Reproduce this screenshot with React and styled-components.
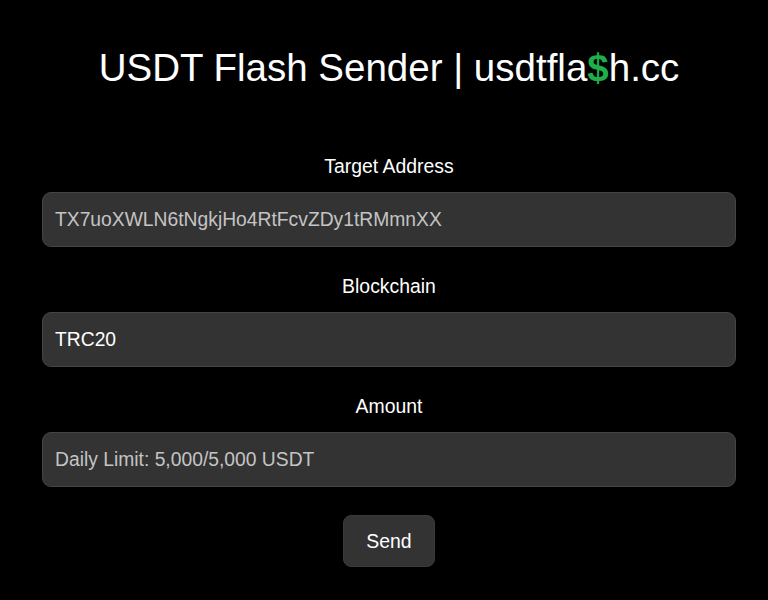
import React from "react";
import styled, { createGlobalStyle } from "styled-components";

const Global = createGlobalStyle`
  html, body { margin: 0; padding: 0; background: #000; }
  body { font-family: "Liberation Sans", Arial, sans-serif; color: #fff; }
`;

const Page = styled.div`
  width: 768px;
  height: 600px;
  background: #000;
  box-sizing: border-box;
  padding: 45px 32px 0 42px;
  display: flex;
  flex-direction: column;
  align-items: stretch;
`;

const Title = styled.h1`
  margin: 0 0 63px 0;
  font-size: 38.5px;
  font-weight: normal;
  line-height: 46px;
  text-align: center;
  color: #fff;
`;

const Dollar = styled.span`
  color: #1fae4b;
  font-weight: bold;
`;

const Field = styled.div`
  display: flex;
  flex-direction: column;
  align-items: stretch;
  margin-bottom: 27px;
`;

const Label = styled.label`
  display: block;
  text-align: center;
  font-size: 19.4px;
  line-height: 24px;
  margin-bottom: 14px;
  color: #fff;
`;

const Input = styled.div`
  box-sizing: border-box;
  height: 55px;
  border-radius: 9px;
  background: #333;
  border: 1px solid #444;
  padding: 0 12px;
  display: flex;
  align-items: center;
  font-size: 19.3px;
  color: ${(p) => (p.$placeholder ? "#c4c4c4" : "#fff")};
`;

const ButtonRow = styled.div`
  display: flex;
  justify-content: center;
  margin-top: 1px;
`;

const Button = styled.button`
  width: 92px;
  height: 52px;
  border-radius: 8px;
  background: #333;
  border: 1px solid #3a3a3a;
  color: #fff;
  font-family: "Liberation Sans", Arial, sans-serif;
  font-size: 19.4px;
  cursor: pointer;
`;

export default function App() {
  return (
    <>
      <Global />
      <Page>
        <Title>
          USDT Flash Sender | usdtfla<Dollar>$</Dollar>h.cc
        </Title>
        <Field>
          <Label>Target Address</Label>
          <Input $placeholder>TX7uoXWLN6tNgkjHo4RtFcvZDy1tRMmnXX</Input>
        </Field>
        <Field>
          <Label>Blockchain</Label>
          <Input>TRC20</Input>
        </Field>
        <Field>
          <Label>Amount</Label>
          <Input $placeholder>Daily Limit: 5,000/5,000 USDT</Input>
        </Field>
        <ButtonRow>
          <Button>Send</Button>
        </ButtonRow>
      </Page>
    </>
  );
}
